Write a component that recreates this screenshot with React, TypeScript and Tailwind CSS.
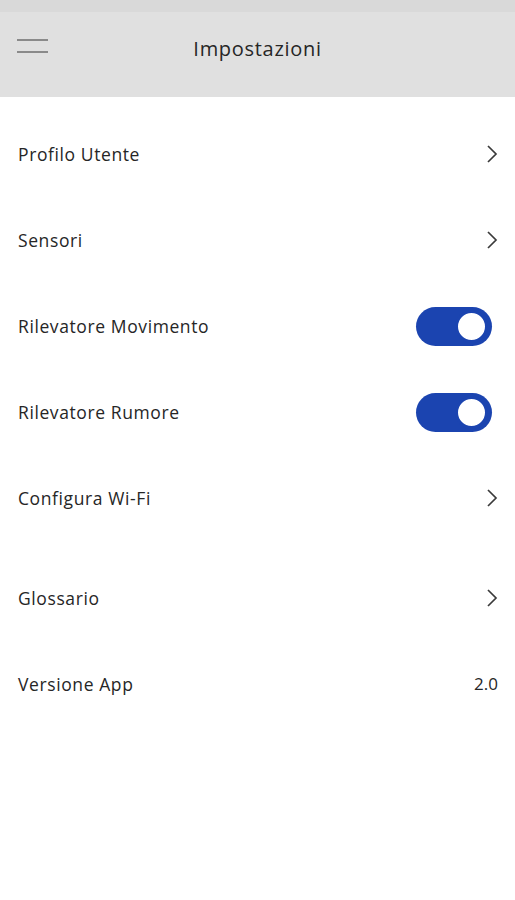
// Settings screen
import React from "react";

// Chevron drawn as svg
function Chevron() {
   return (
      <svg width="12" height="20" viewBox="0 0 12 20" className="shrink-0">
         <path d="M2 2 L10 10 L2 18" fill="none" stroke="#3a3a3a" strokeWidth="1.7" />
      </svg>
   );
}

// Toggle switch
function Toggle() {
   return (
      <div className="w-[76px] h-[39px] rounded-full bg-[#1b44b0] flex items-center justify-end pr-[4px]">
         <div className="size-[33px] rounded-full bg-white border-[3px] border-[#1b44b0]" />
      </div>
   );
}

type Row = { label: string; right: "chevron" | "toggle" | string; extra?: boolean };

const rows: Row[] = [
   { label: "Profilo Utente", right: "chevron" },
   { label: "Sensori", right: "chevron" },
   { label: "Rilevatore Movimento", right: "toggle" },
   { label: "Rilevatore Rumore", right: "toggle" },
   { label: "Configura Wi-Fi", right: "chevron" },
   { label: "Glossario", right: "chevron", extra: true },
   { label: "Versione App", right: "2.0" },
];

export default function App() {
   return (
      <div className="w-[515px] h-[900px] bg-white text-[#262626] font-['Open_Sans','Noto_Sans',sans-serif]">
         {/* Status bar strip */}
         <div className="h-[12px] bg-[#d9d9d9]" />
         {/* Header */}
         <div className="h-[85px] bg-[#e0e0e0] flex items-center relative">
            <div className="absolute left-[17px] top-[27px] flex flex-col gap-[10px]">
               <div className="w-[31px] h-[2px] bg-[#8a8a8a]" />
               <div className="w-[31px] h-[2px] bg-[#8a8a8a]" />
            </div>
            <div className="w-full text-center text-[20px] tracking-[0.7px] pb-[12px]">Impostazioni</div>
         </div>
         {/* Rows */}
         <div className="pt-[14px]">
            {rows.map((r) => (
               <div
                  key={r.label}
                  className={`h-[86px] flex items-center justify-between pl-[18px] pr-[17px] ${r.extra ? "mt-[14px]" : ""}`}
               >
                  <span className="text-[17.5px] tracking-[0.6px]">{r.label}</span>
                  {r.right === "chevron" ? (
                     <Chevron />
                  ) : r.right === "toggle" ? (
                     <div className="mr-[6px]">
                        <Toggle />
                     </div>
                  ) : (
                     <span className="text-[17px]">{r.right}</span>
                  )}
               </div>
            ))}
         </div>
      </div>
   );
}
